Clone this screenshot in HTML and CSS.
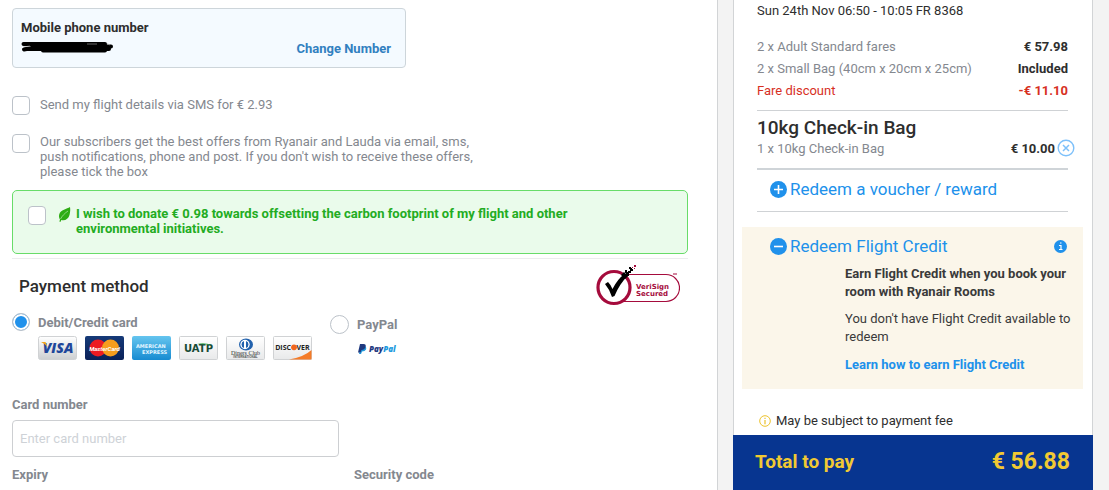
FILE: index.html
```html
<!DOCTYPE html>
<html lang="en">
<head>
<meta charset="utf-8">
<title>Payment</title>
<link rel="stylesheet" href="styles.css">
</head>
<body>
<div class="page">
  <main class="checkout">
    <section class="phone">
      <div class="phone-info">
        <strong>Mobile phone number</strong>
        <svg class="redacted" width="94" height="12" viewBox="0 0 94 12" role="img" aria-label="Hidden number">
          <path d="M2.500 3H84M12 5.500H90M4 8h84M3 8.500l8-1.500M22 9.500h62" fill="none" stroke="#000" stroke-width="4" stroke-linecap="round" stroke-linejoin="round"/>
          <path d="M2 6l7-1M66 3h10M86 2.500l3 1.500" fill="none" stroke="#aaa" stroke-width="0.600"/>
        </svg>
      </div>
      <a class="change" href="#">Change Number</a>
    </section>

    <div class="option">
      <input type="checkbox" id="sms"><label for="sms">Send my flight details via SMS for € 2.93</label>
    </div>
    <div class="option offers">
      <input type="checkbox" id="offers"><label for="offers">Our subscribers get the best offers from Ryanair and Lauda via email, sms, push notifications, phone and post. If you don't wish to receive these offers, please tick the box</label>
    </div>

    <div class="donate">
      <input type="checkbox" id="donate">
      <svg width="13" height="17" viewBox="0 0 13 17" aria-hidden="true">
        <path d="M12 1C9 3 2.500 3.500 1.200 8.500c-.5 2.200 0 3.700.8 5l-.6 2 1 .5.900-2C7 15 10.500 13 11.500 9 12.200 6 12.500 4 12 1Z" fill="#2eac13"/>
        <path d="M2.500 13C4 10 7 7 10 5" fill="none" stroke="#eafbeb" stroke-width=".5"/>
      </svg>
      <label for="donate">I wish to donate € 0.98 towards offsetting the carbon footprint of my flight and other environmental initiatives.</label>
    </div>

    <section class="payment">
      <header class="payment-head">
        <h2>Payment method</h2>
        <svg width="84" height="43" viewBox="0 0 84 43" role="img" aria-label="VeriSign Secured">
          <path d="M27 11.500H70a13 13 0 0 1 0 27H27" fill="#fff" stroke="#a50b3c" stroke-width="1.200"/>
          <circle cx="18" cy="24.500" r="16" fill="#fff" stroke="#a50b3c" stroke-width="3.200"/>
          <path d="M9 21l3-2q3 3 4.500 7 5-10 12-15l3 2q-8 8-13 20l-2.500 1q-2-7-7-13Z" fill="#000"/>
          <path d="M25 12l3-3 4 4-3 3zM29 7h2v3h-2zM32 8h3v2h-3zM33 4h2v2h-2zM35 6h2v2h-2zM31 11h2v2h-2zM30 9h3v3h-3zM34 5h2v3h-2z" fill="#000"/>
          <path d="M38 2h2v2h-2zM36 4h1v1h-1zM38 5h1v1h-1z" fill="#a50b3c"/>
          <text x="40" y="26" class="seal">VeriSign</text>
          <text x="40" y="33" class="seal">Secured</text>
          <path d="M77 11h4" stroke="#a50b3c"/>
        </svg>
      </header>

      <div class="methods">
        <div class="method">
          <div class="method-name"><input type="radio" name="method" id="card" checked><label for="card">Debit/Credit card</label></div>
          <div class="cards">
            <svg width="39" height="24" viewBox="0 0 39 24" role="img" aria-label="Visa">
              <defs>
                <linearGradient id="silver" x1="0" y1="0" x2="0" y2="1"><stop offset="0" stop-color="#fff"/><stop offset="1" stop-color="#cdcfd1"/></linearGradient>
                <linearGradient id="light" x1="0" y1="0" x2="0" y2="1"><stop offset="0" stop-color="#fff"/><stop offset="1" stop-color="#e8e9ea"/></linearGradient>
                <linearGradient id="navy" x1="0" y1="0" x2="0" y2="1"><stop offset="0" stop-color="#163a78"/><stop offset="1" stop-color="#0a2158"/></linearGradient>
                <linearGradient id="sky" x1="0" y1="0" x2="0" y2="1"><stop offset="0" stop-color="#65c5ef"/><stop offset="1" stop-color="#178bd1"/></linearGradient>
              </defs>
              <rect x=".5" y=".5" width="38" height="23" rx="2" fill="url(#silver)" stroke="#d0d2d4"/>
              <text x="20" y="17" class="visa">VISA</text>
              <path d="M3 6h4.500l2 5q-2-3-6.500-5Z" fill="#f3a51c"/>
            </svg>
            <svg width="39" height="24" viewBox="0 0 39 24" role="img" aria-label="MasterCard">
              <rect width="39" height="24" rx="2" fill="url(#navy)"/>
              <circle cx="13" cy="12" r="8.500" fill="#ec1b22"/><circle cx="25.500" cy="12" r="8.500" fill="#f79d1d"/>
              <text x="19.500" y="14.500" class="master">MasterCard</text>
            </svg>
            <svg width="39" height="24" viewBox="0 0 39 24" role="img" aria-label="American Express">
              <rect width="39" height="24" rx="2" fill="url(#sky)"/>
              <text x="4" y="12" class="amex">AMERICAN</text><text x="10" y="18" class="amex">EXPRESS</text>
            </svg>
            <svg width="39" height="24" viewBox="0 0 39 24" role="img" aria-label="UATP">
              <rect x=".5" y=".5" width="38" height="23" rx="1" fill="url(#light)" stroke="#d0d2d4"/>
              <text x="19.500" y="16" class="uatp">UATP</text>
              <path d="M18 8q7-2 15 1-8-1-15-1Z" fill="#43b058"/>
            </svg>
            <svg width="39" height="24" viewBox="0 0 39 24" role="img" aria-label="Diners Club International">
              <rect x=".5" y=".5" width="38" height="23" rx="1" fill="url(#light)" stroke="#d0d2d4"/>
              <ellipse cx="20" cy="8.500" rx="7" ry="6" fill="#2161ad"/><circle cx="19" cy="8.500" r="4.700" fill="#fff"/>
              <path d="M18 5a3.700 3.700 0 0 0 0 7zM20 5a3.700 3.700 0 0 1 0 7z" fill="#2161ad"/>
              <text x="19.500" y="19" class="diners">Diners Club</text><text x="19.500" y="22" class="diners-small">INTERNATIONAL</text>
            </svg>
            <svg width="39" height="24" viewBox="0 0 39 24" role="img" aria-label="Discover">
              <rect x=".5" y=".5" width="38" height="23" rx="1" fill="url(#light)" stroke="#d0d2d4"/>
              <path d="M16 23.500Q31 21 38.500 14v9.500Z" fill="#f47b28"/>
              <text x="18" y="14" class="discover disc">DISC</text><circle cx="21" cy="11.300" r="2.900" fill="#f0661f"/><text x="23.500" y="14" class="discover">VER</text>
            </svg>
          </div>
        </div>
        <div class="method paypal">
          <div class="method-name"><input type="radio" name="method" id="paypal"><label for="paypal">PayPal</label></div>
          <svg width="41" height="12" viewBox="0 0 41 12" role="img" aria-label="PayPal">
            <path d="M4 2.500h3q3 1 2 4-1 2-4 2l-1 2.500H2Z" fill="#2299dc"/>
            <path d="M3 1h3.500q3 0 2 3-1 3-4 3L3.500 9.500H1Z" fill="#1f397f"/>
            <text x="12" y="9" class="pp"><tspan fill="#1f397f">Pay</tspan><tspan fill="#1d9ade">Pal</tspan></text>
          </svg>
        </div>
      </div>

      <div class="field"><label for="number">Card number</label><input type="text" id="number" placeholder="Enter card number"></div>
      <div class="labels"><span>Expiry</span><span>Security code</span></div>
    </section>
  </main>

  <aside class="summary">
    <div class="lines">
      <p class="flight">Sun 24th Nov 06:50 - 10:05 FR 8368</p>
      <div class="line"><span>2 x Adult Standard fares</span><b>€ 57.98</b></div>
      <div class="line"><span>2 x Small Bag (40cm x 20cm x 25cm)</span><b>Included</b></div>
      <div class="line discount"><span>Fare discount</span><b>-€ 11.10</b></div>
      <div class="bag">
        <h3>10kg Check-in Bag</h3>
        <div class="line bag-line"><span>1 x 10kg Check-in Bag</span><b>€ 10.00</b>
          <button class="remove" aria-label="Remove bag"><svg width="18" height="18" viewBox="0 0 18 18"><circle cx="9" cy="9" r="7.800" fill="none" stroke="#7dc0fa" stroke-width="1.400"/><path d="M6 6l6 6M12 6l-6 6" stroke="#7dc0fa" stroke-width="1.500"/></svg></button>
        </div>
      </div>
      <div class="voucher">
        <button class="redeem"><svg width="17" height="17" viewBox="0 0 17 17"><circle cx="8.500" cy="8.500" r="8.500" fill="#2091eb"/><path d="M4 8.500h9M8.500 4v9" stroke="#fff" stroke-width="1.600"/></svg>Redeem a voucher / reward</button>
      </div>
    </div>

    <section class="credit">
      <div class="credit-head">
        <button class="redeem"><svg width="17" height="17" viewBox="0 0 17 17"><circle cx="8.500" cy="8.500" r="8.500" fill="#2091eb"/><path d="M4 8.500h9" stroke="#fff" stroke-width="1.600"/></svg>Redeem Flight Credit</button>
        <svg width="13" height="13" viewBox="0 0 13 13" role="img" aria-label="Information"><circle cx="6.500" cy="6.500" r="6.500" fill="#2091eb"/><path d="M5 5.500h2v4M5 9.500h3.500M6 3h1.500" fill="none" stroke="#fff" stroke-width="1.200"/></svg>
      </div>
      <div class="credit-body">
        <p><b>Earn Flight Credit when you book your room with Ryanair Rooms</b></p>
        <p>You don't have Flight Credit available to redeem</p>
        <a href="#">Learn how to earn Flight Credit</a>
      </div>
    </section>

    <p class="fee"><svg width="12" height="12" viewBox="0 0 12 12" aria-hidden="true"><circle cx="6" cy="6" r="5.300" fill="none" stroke="#ecc22c"/><path d="M6 5v4.300M6 2.700v1.200" stroke="#ecc22c" stroke-width="1.200"/></svg>May be subject to payment fee</p>
    <footer class="total"><span>Total to pay</span><strong>€ 56.88</strong></footer>
  </aside>
</div>
</body>
</html>
```

FILE: styles.css
```css
* { box-sizing: border-box; }
body {
  margin: 0;
  background: #f3f3f3;
  font: 13px/15px Roboto, "Liberation Sans", sans-serif;
  color: #2e2e2e;
}
h2, h3, p { margin: 0; font-weight: 500; }
p { font-weight: 400; }
b, strong { font-weight: 700; }
svg { display: block; flex: none; }
a { text-decoration: none; font-weight: 700; }
button { border: 0; padding: 0; background: none; font: inherit; cursor: pointer; }
input { appearance: none; margin: 0; flex: none; background: #fff; border: 1px solid #bcc2c9; font: inherit; }
input[type="checkbox"] { width: 18px; height: 19px; border-radius: 4px; }
input[type="radio"] { width: 19px; height: 19px; border-radius: 50%; }
input[type="radio"]:checked { width: 18px; height: 18px; margin-right: 1px; background: #2091eb; box-shadow: inset 0 0 0 2px #fff; }

.page { display: flex; min-height: 100vh; padding-right: 16px; gap: 15px; }
.checkout {
  flex: 1;
  padding: 8px 29px 0 12px;
  background: #fff;
  border-right: 1px solid #d2d4d6;
  color: #84888f;
}

.phone {
  display: flex;
  justify-content: space-between;
  align-items: flex-end;
  max-width: 394px;
  height: 60px;
  padding: 11px 14px 11px 8px;
  border: 1px solid #cdd5da;
  border-radius: 4px;
  background: #f4faff;
}
.phone-info { display: grid; gap: 6px; align-self: flex-start; color: #2e2e2e; }
.phone-info strong, .method-name label, .field label, .labels { font-weight: 700; }
.change { color: #3180bf; }

.option { display: flex; gap: 10px; margin-top: 28px; align-items: flex-start; max-width: 476px; }
.option label { padding-top: 1px; }
.offers { margin-top: 19px; }
.offers label { padding-top: 0; }

.donate {
  display: flex;
  align-items: flex-start;
  height: 64px;
  margin-top: 11px;
  padding: 15px 100px 0 15px;
  border: 1px solid #68dc69;
  border-radius: 5px;
  background: #eafbeb;
  color: #22ac22;
  font-weight: 700;
}
.donate svg { margin: 0 5px 0 12px; }

.payment { margin-top: 4px; border-top: 1px solid #ececee; }
.payment-head { display: flex; justify-content: space-between; padding: 4px 8px 0 7px; height: 54px; }
.payment-head h2 { margin-top: 13px; font-size: 17px; line-height: 20px; color: #2e2e2e; }
.seal { font: 700 7px "DejaVu Sans", sans-serif; fill: #a50b3c; }

.methods { display: flex; gap: 18px; }
.method-name { display: flex; gap: 7px; align-items: center; }
.paypal .method-name { gap: 8px; }
.cards { display: flex; gap: 8px; margin: 5px 0 0 26px; }
.paypal { padding-top: 2px; }
.paypal svg { margin: 9px 0 0 27px; }
.visa { font: italic 800 14px "Open Sans", sans-serif; fill: #20469a; text-anchor: middle; }
.master { font: italic 700 6px Roboto, sans-serif; fill: #fff; text-anchor: middle; }
.amex { font: 700 5px "DejaVu Sans", sans-serif; fill: #e2f5ff; }
.uatp { font: 700 10px "DejaVu Sans", sans-serif; fill: #174a35; text-anchor: middle; }
.diners { font: 6px "Liberation Serif", serif; fill: #333; text-anchor: middle; }
.diners-small { font: 700 3px "Liberation Sans", sans-serif; fill: #555; text-anchor: middle; }
.discover { font: 700 7px "Open Sans", sans-serif; fill: #222; }
.disc { text-anchor: end; }
.pp { font: italic 800 8px "Open Sans", sans-serif; }

.field { display: grid; gap: 8px; max-width: 327px; margin-top: 37px; }
.field input { width: 100%; height: 37px; padding: 0 7px; border-color: #cdcfd2; border-radius: 4px; }
.field input::placeholder { color: #ced2d7; opacity: 1; }
.labels { display: grid; grid-template-columns: 327px 1fr; gap: 15px; margin-top: 10px; }

.summary {
  flex: 0 0 360px;
  display: flex;
  flex-direction: column;
  background: #fff;
  border: solid #d2d4d6;
  border-width: 0 1px;
}
.lines { padding: 0 24px 0 23px; }
.flight { margin: 3px 0 17px; line-height: 16px; }
.line { display: flex; justify-content: space-between; line-height: 22px; color: #84888f; }
.line b { color: #2e2e2e; }
.line.discount, .line.discount b { color: #d7301f; }
.bag { margin-top: 8px; padding-top: 6px; border-top: 1px solid #cfd2d5; border-bottom: 2px solid #cfd4d8; height: 60px; }
.bag h3 { font-size: 19px; line-height: 22px; }
.bag-line { margin-right: -7px; line-height: 20px; }
.bag-line b { margin-left: auto; }
.remove { margin-left: 2px; height: 18px; }
.voucher { height: 42px; padding: 7px 0 0 13px; border-bottom: 1px solid #cfd2d5; }
.redeem { display: flex; align-items: center; gap: 3px; font-size: 17px; line-height: 24px; color: #2091eb; }

.credit { margin: 15px 9px 0 8px; padding: 7px 8px 15px 28px; background: #fbf6ea; line-height: 18px; }
.credit-head { display: flex; justify-content: space-between; align-items: center; padding-right: 8px; }
.credit-body { padding: 7px 0 0 75px; color: #3a3a3a; }
.credit-body p { margin-bottom: 9px; }
.credit-body p + p { margin-bottom: 10px; }
.credit-body a { color: #2091eb; }

.fee { display: flex; align-items: center; gap: 5px; margin: 24px 0 6px 25px; line-height: 16px; }
.total {
  flex: 1;
  display: flex;
  justify-content: space-between;
  align-items: center;
  min-height: 55px;
  margin: 0 -1px;
  padding: 0 23px 3px 22px;
  background: #073590;
  color: #f1c933;
  font-size: 19px;
  font-weight: 700;
}
.total strong { font-size: 23px; }
```
